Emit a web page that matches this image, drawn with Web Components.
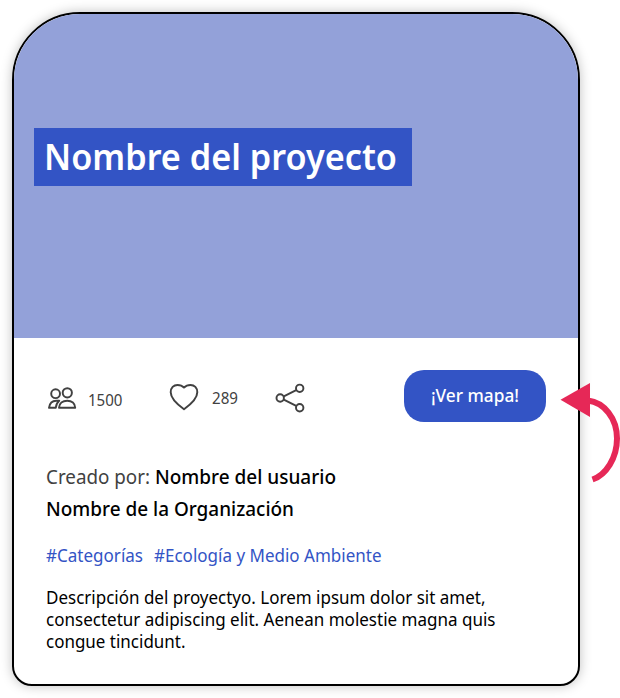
<!DOCTYPE html>
<html lang="es">
<head>
<meta charset="utf-8">
<title>Nombre del proyecto</title>
<style>
body { margin: 0; background: #fff; font-family: "Noto Sans", "Open Sans", sans-serif; color: #000; width: 620px; height: 698px; overflow: hidden; }
</style>
</head>
<body>
<project-page></project-page>
<script>
// One line of text, set to an exact width by a horizontal scale.
class FitText extends HTMLElement {
  constructor() {
    super();
    this.attachShadow({ mode: 'open' }).innerHTML = `
      <style>
        :host { display: block; white-space: nowrap; flex: none; }
        span { display: inline-block; transform-origin: 0 50%; }
      </style><span><slot></slot></span>`;
  }
  connectedCallback() {
    const width = Number(this.getAttribute('width'));
    const span = this.shadowRoot.querySelector('span');
    this.style.width = width + 'px';
    const natural = span.getBoundingClientRect().width;
    if (natural) span.style.transform = `scaleX(${width / natural})`;
  }
}

class ProjectBanner extends HTMLElement {
  constructor() {
    super();
    this.attachShadow({ mode: 'open' }).innerHTML = `
      <style>
        :host { display: block; height: 324px; background: #93a1d9; padding: 114px 0 0 20px; box-sizing: border-box; }
        h1 { margin: 0; width: 378px; height: 58px; box-sizing: border-box; padding-left: 10px; background: #3354c5;
             color: #fff; font-size: 36px; line-height: 58px; font-weight: 600; }
      </style>
      <h1><fit-text width="353"><slot></slot></fit-text></h1>`;
  }
}

class StatIcon extends HTMLElement {
  constructor() {
    super();
    const shapes = {
      people: ['0 0 30 24', '<circle cx="8.6" cy="7.7" r="4.4"/><circle cx="20.3" cy="6.8" r="4.6"/><path d="M12.2 14.7H9.2C5.2 14.7 2.6 17.500 2 21.8H8.800C9 18.500 10.400 16.200 12.2 14.7Z"/><path d="M12 21.8C12.200 17.400 15.600 14.7 20.2 14.7S28 17.400 28.2 21.8Z"/>'],
      heart: ['0 0 30 28', '<path d="M15 26.2C10.3 22.800 1.7 16.500 1.7 9.2 1.7 4.900 4.600 1.900 8.5 1.900 11.200 1.900 13.300 2.700 15 4.500 16.700 2.700 18.800 1.900 21.5 1.900 25.400 1.900 28.3 4.900 28.3 9.2 28.3 16.500 19.700 22.800 15 26.2Z"/>'],
      share: ['0 0 30 30', '<circle cx="5.2" cy="15" r="3.7"/><circle cx="24.7" cy="5.3" r="3.7"/><circle cx="24.7" cy="24.7" r="3.7"/><path d="M8.8 13.3 21.2 7.1M8.8 16.7 21.2 22.9"/>']
    };
    const [box, body] = shapes[this.getAttribute('name')];
    const [, , w, h] = box.split(' ');
    this.attachShadow({ mode: 'open' }).innerHTML = `
      <style>:host { display: block; flex: none; } svg { display: block; }</style>
      <svg width="${w}" height="${h}" viewBox="${box}" fill="none" stroke="#414141" stroke-width="1.95" stroke-linejoin="round">${body}</svg>`;
  }
}

class MapButton extends HTMLElement {
  constructor() {
    super();
    this.attachShadow({ mode: 'open' }).innerHTML = `
      <style>
        :host { display: block; flex: none; }
        button { display: block; width: 142px; height: 52px; padding: 0 0 0 27px; border: 0; text-align: left;
                 border-radius: 20px; background: #3354c5; color: #fff; font: 500 18px/50px "Noto Sans", sans-serif; }
        fit-text { height: 52px; }
      </style>
      <button><fit-text width="88"><slot></slot></fit-text></button>`;
  }
}

class StatsBar extends HTMLElement {
  constructor() {
    super();
    this.attachShadow({ mode: 'open' }).innerHTML = `
      <style>
        :host { display: flex; align-items: flex-start; padding: 32px 32px 0 33px; height: 84px; box-sizing: border-box;
                color: #414141; font-size: 16px; line-height: 22px; }
        stat-icon, fit-text { margin-top: var(--top); }
        map-button { margin-left: auto; }
      </style>
      <stat-icon name="people" style="--top:16px"></stat-icon>
      <fit-text width="34.500" style="--top:19px;margin-left:11px">1500</fit-text>
      <stat-icon name="heart" style="--top:13px;margin-left:46.500px"></stat-icon>
      <fit-text width="26" style="--top:17px;margin-left:13px">289</fit-text>
      <stat-icon name="share" style="--top:13px;margin-left:37px"></stat-icon>
      <map-button>¡Ver mapa!</map-button>`;
  }
}

class ProjectDetails extends HTMLElement {
  constructor() {
    super();
    this.attachShadow({ mode: 'open' }).innerHTML = `
      <style>
        :host { display: block; padding: 39px 32px 0; }
        .by { display: flex; gap: 5px; font-size: 20px; line-height: 32px; font-weight: 500; }
        .label { color: #414141; font-weight: 400; }
        .tags { display: flex; gap: 11px; margin-top: 17px; font-size: 18px; line-height: 26px; color: #3354c5; }
        .text { margin-top: 18px; font-size: 18px; line-height: 22px; }
      </style>
      <div class="by"><fit-text class="label" width="104">Creado por:</fit-text><fit-text width="181">Nombre del usuario</fit-text></div>
      <div class="by"><fit-text width="248">Nombre de la Organización</fit-text></div>
      <div class="tags"><fit-text width="97">#Categorías</fit-text><fit-text width="227.500">#Ecología y Medio Ambiente</fit-text></div>
      <div class="text">
        <fit-text width="439.500">Descripción del proyectyo. Lorem ipsum dolor sit amet,</fit-text>
        <fit-text width="449.500">consectetur adipiscing elit. Aenean molestie magna quis</fit-text>
        <fit-text width="139.500">congue tincidunt.</fit-text>
      </div>`;
  }
}

class ProjectCard extends HTMLElement {
  constructor() {
    super();
    this.attachShadow({ mode: 'open' }).innerHTML = `
      <style>
        :host { display: block; box-sizing: border-box; width: 568px; height: 674px; border: 2px solid #000;
                border-radius: 68px 68px 20px 20px; overflow: hidden; background: #fff; box-shadow: 0 0 12px rgba(0,0,0,.25); }
      </style><slot></slot>`;
  }
}

class PointerArrow extends HTMLElement {
  constructor() {
    super();
    this.attachShadow({ mode: 'open' }).innerHTML = `
      <style>:host { position: absolute; left: 560px; top: 380px; } svg { display: block; }</style>
      <svg width="60" height="110" viewBox="560 380 60 110"><path d="M588 400.5C604 402.5 617 418 617 438.500C617 458 606 475 592.500 479.500" fill="none" stroke="#e62857" stroke-width="6"/><path d="M560.500 399.700 590 383V417Z" fill="#e62857"/></svg>`;
  }
}

class ProjectPage extends HTMLElement {
  constructor() {
    super();
    this.attachShadow({ mode: 'open' }).innerHTML = `
      <style>:host { display: block; position: relative; padding: 12px; width: 620px; height: 698px; box-sizing: border-box; }</style>
      <project-card>
        <project-banner>Nombre del proyecto</project-banner>
        <stats-bar></stats-bar>
        <project-details></project-details>
      </project-card>
      <pointer-arrow></pointer-arrow>`;
  }
}

customElements.define('fit-text', FitText);
customElements.define('stat-icon', StatIcon);
customElements.define('map-button', MapButton);
customElements.define('project-banner', ProjectBanner);
customElements.define('stats-bar', StatsBar);
customElements.define('project-details', ProjectDetails);
customElements.define('project-card', ProjectCard);
customElements.define('pointer-arrow', PointerArrow);
customElements.define('project-page', ProjectPage);
</script>
</body>
</html>
